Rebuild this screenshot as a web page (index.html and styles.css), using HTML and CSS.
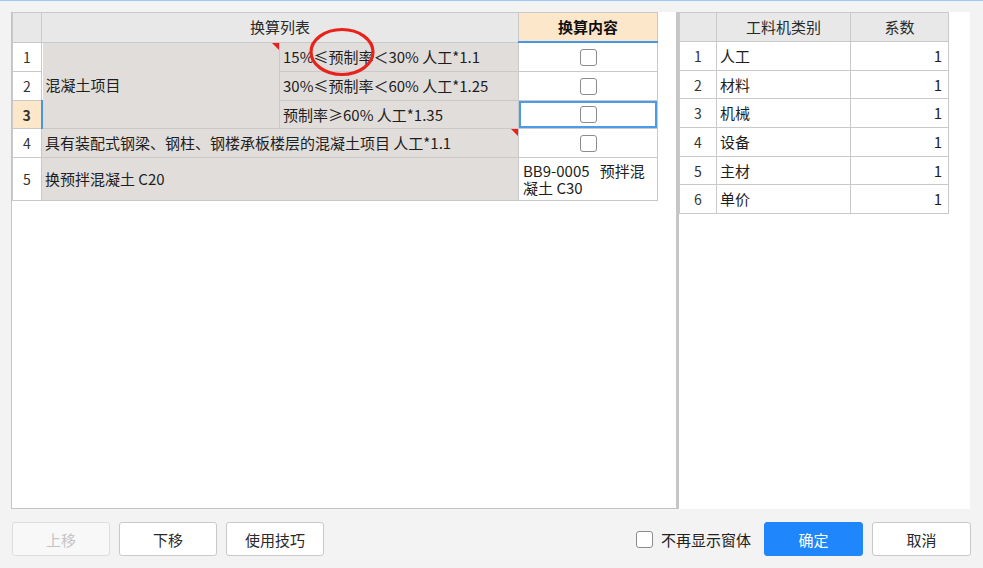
FILE: index.html
```html
<!DOCTYPE html>
<html lang="zh-CN">
<head>
    <meta charset="UTF-8">
    <title>标准换算</title>
    <link rel="stylesheet" href="styles.css">
</head>
<body>

    <div class="window">
        <div class="panels">
            <div class="panel-left">
                <table class="grid grid-main">
                    <colgroup>
                        <col class="c-num">
                        <col class="c-name">
                        <col class="c-cond">
                        <col class="c-value">
                    </colgroup>
                    <tr class="row-head">
                        <th></th>
                        <th colspan="2">换算列表</th>
                        <th class="head-active">换算内容</th>
                    </tr>
                    <tr>
                        <td class="num">1</td>
                        <td class="item" rowspan="3">混凝土项目<span class="mark"></span></td>
                        <td class="item">15%≤预制率＜30% 人工*1.1</td>
                        <td><div class="check"></div></td>
                    </tr>
                    <tr>
                        <td class="num">2</td>
                        <td class="item">30%≤预制率＜60% 人工*1.25</td>
                        <td><div class="check"></div></td>
                    </tr>
                    <tr class="row-short">
                        <td class="num num-active">3</td>
                        <td class="item">预制率≥60% 人工*1.35</td>
                        <td class="cell-active"><div class="check"></div></td>
                    </tr>
                    <tr>
                        <td class="num">4</td>
                        <td class="item" colspan="2">具有装配式钢梁、钢柱、钢楼承板楼层的混凝土项目 人工*1.1<span class="mark"></span></td>
                        <td><div class="check"></div></td>
                    </tr>
                    <tr class="row-tall">
                        <td class="num">5</td>
                        <td class="item" colspan="2">换预拌混凝土 C20</td>
                        <td class="wrap">BB9-0005&nbsp;&nbsp; 预拌混凝土 C30</td>
                    </tr>
                </table>

                <!-- пометка красным -->
                <svg class="annot" width="68" height="52" viewBox="0 0 68 52">
                    <ellipse cx="34" cy="25" rx="31" ry="22.5" fill="none" stroke="#e8231c" stroke-width="3.2"/>
                </svg>
            </div>

            <div class="panel-right">
                <table class="grid grid-side">
                    <colgroup>
                        <col class="s-num">
                        <col class="s-name">
                        <col class="s-rate">
                    </colgroup>
                    <tr class="row-head">
                        <th></th>
                        <th>工料机类别</th>
                        <th>系数</th>
                    </tr>
                    <tr><td class="num">1</td><td>人工</td><td class="rate">1</td></tr>
                    <tr><td class="num">2</td><td>材料</td><td class="rate">1</td></tr>
                    <tr><td class="num">3</td><td>机械</td><td class="rate">1</td></tr>
                    <tr><td class="num">4</td><td>设备</td><td class="rate">1</td></tr>
                    <tr><td class="num">5</td><td>主材</td><td class="rate">1</td></tr>
                    <tr><td class="num">6</td><td>单价</td><td class="rate">1</td></tr>
                </table>
            </div>
        </div>

        <div class="footer">
            <div class="btn-group btn-group-left">
                <button class="btn btn-disabled">上移</button>
                <button class="btn">下移</button>
                <button class="btn">使用技巧</button>
            </div>
            <div class="btn-group">
                <label class="option"><span class="check check-small"></span>不再显示窗体</label>
                <button class="btn btn-primary">确定</button>
                <button class="btn">取消</button>
            </div>
        </div>
    </div>

</body>
</html>
```

FILE: styles.css
```css
body {
    margin: 0;
    background-color: #f3f3f3;
    font-family: "Noto Sans CJK SC", sans-serif;
    color: #1e1e1e;
}

.window {
    height: 568px;
    box-sizing: border-box;
    border-top: 1px solid #9ccaf3;
    padding: 11px 12px 0 11px;
}

.panels {
    display: flex;
    height: 497px;
}

.panel-left {
    position: relative;
    width: 668px;
    box-sizing: border-box;
    background: #ffffff;
    border: 1px solid #c4c4c4;
    border-top: none;
    border-right: 3px solid #c6c6c6;
}

.panel-right {
    width: 291px;
    background: #ffffff;
}

/* таблицы */
.grid {
    border-collapse: collapse;
    table-layout: fixed;
    font-size: 15px;
    line-height: 18px;
}

.grid th,
.grid td {
    border: 1px solid #c9c9c9;
    padding: 0 3px;
    height: 28px;
    white-space: nowrap;
    overflow: hidden;
    text-align: left;
}

.grid th {
    background: #e8e8e8;
    font-weight: normal;
    text-align: center;
    color: #2a2a2a;
    height: 28px;
}

.grid-main {
    width: 645px;
    border: 1px solid #c4c4c4;
}

.c-num { width: 29px; }
.c-name { width: 238px; }
.c-cond { width: 239px; }
.c-value { width: 139px; }

.grid-side {
    width: 269px;
    border: 1px solid #c4c4c4;
}

.s-num { width: 37px; }
.s-name { width: 134px; }
.s-rate { width: 98px; }

.grid td.num {
    text-align: center;
    font-size: 14px;
    padding: 0;
    color: #333;
}

.grid td.num-active {
    background: #fde7cb;
    font-weight: bold;
    border-right: 2px solid #4596e6;
}

.grid th.head-active {
    background: #fde7cb;
    font-weight: bold;
    color: #111;
    border-bottom: 2px solid #4596e6;
}

.grid td.item {
    position: relative;
    background: #e1dddb;
}

.grid td.cell-active {
    box-shadow: inset 0 0 0 2px #4a9be8;
}

.grid td.wrap {
    white-space: normal;
    padding: 0 6px 0 4px;
    line-height: 17px;
    font-size: 15px;
}

.grid td.rate {
    text-align: right;
    padding-right: 6px;
}

.row-short td { height: 27px; }
.row-tall td { height: 42px; }

.grid-side td { height: 27.7px; }

.mark {
    position: absolute;
    top: 0;
    right: 0;
    width: 0;
    height: 0;
    border-top: 7px solid #f01d1d;
    border-left: 7px solid transparent;
}

.check {
    display: block;
    width: 17px;
    height: 17px;
    box-sizing: border-box;
    margin: 0 auto;
    border: 1px solid #8c8c8c;
    border-radius: 3px;
    background: #fff;
}

.annot {
    position: absolute;
    left: 296px;
    top: 15px;
}

/* нижняя панель */
.footer {
    display: flex;
    justify-content: space-between;
    margin-top: 13px;
}

.btn-group {
    display: flex;
    align-items: center;
    gap: 9px;
}

.btn-group-left {
    padding-left: 1px;
}

.btn {
    width: 98px;
    height: 34px;
    padding: 0;
    border: 1px solid #c9c9c9;
    border-radius: 3px;
    background: #ffffff;
    font-family: "Noto Sans CJK SC", sans-serif;
    font-size: 15px;
    color: #2a2a2a;
    cursor: pointer;
}

.btn-disabled {
    background: #f8f8f8;
    border-color: #dedede;
    color: #c4c4c4;
}

.btn-primary {
    width: 99px;
    background: #1f87fb;
    border-color: #1f87fb;
    color: #ffffff;
}

.btn-group .btn:last-child {
    width: 99px;
}

.btn-group-left .btn:last-child {
    width: 98px;
}

.option {
    display: flex;
    align-items: center;
    gap: 8px;
    margin-right: 4px;
    font-size: 15px;
    color: #222;
}

.check-small {
    margin: 0;
}
```
